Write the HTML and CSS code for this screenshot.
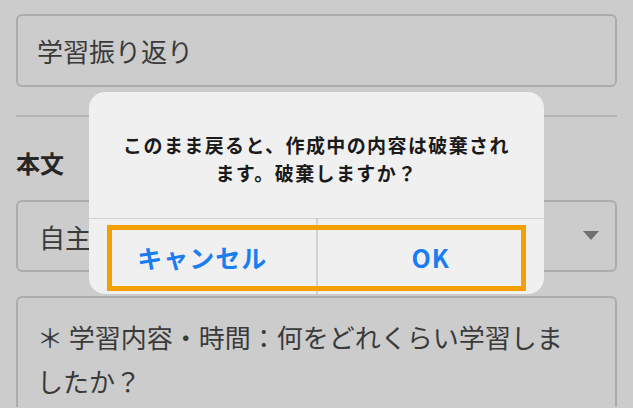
FILE: index.html
```html
<!DOCTYPE html>
<html>
<head>
<meta charset="utf-8">
<link rel="stylesheet" href="styles.css">
</head>
<body>

<div class="page">
  <div class="field title-field">学習振り返り</div>
  <div class="divider"></div>
  <div class="label">本文</div>
  <div class="field select-field">
    <span>自主学習</span>
    <span class="caret"></span>
  </div>
  <div class="field text-field">＊ 学習内容・時間：何をどれくらい学習しましたか？</div>
</div>

<!-- discard confirmation -->
<div class="alert">
  <div class="alert-message">このまま戻ると、作成中の内容は破棄されます。破棄しますか？</div>
  <div class="alert-actions">
    <button class="alert-button">キャンセル</button>
    <button class="alert-button">OK</button>
  </div>
</div>
<div class="highlight"></div>

</body>
</html>
```

FILE: styles.css
```css
html, body {
  margin: 0;
  height: 100%;
  overflow: hidden;
}

body {
  background-color: #cccccc;
  font-family: "Noto Sans CJK JP", "Noto Sans", sans-serif;
  color: #333;
  position: relative;
}

.page {
  padding: 14px 16px 0;
}

.field {
  box-sizing: border-box;
  border: 2px solid #acacac;
  border-radius: 6px;
  font-size: 26px;
  color: #3a3a3a;
}

.title-field {
  height: 73px;
  padding-left: 19px;
  display: flex;
  align-items: center;
}

.divider {
  height: 2px;
  background-color: #b4b4b4;
  margin-top: 28px;
}

.label {
  font-size: 24px;
  font-weight: bold;
  color: #262626;
  line-height: 30px;
  margin-top: 31px;
}

.select-field {
  height: 72px;
  margin-top: 22px;
  padding: 0 16px 0 21px;
  display: flex;
  align-items: center;
  justify-content: space-between;
}

.caret {
  width: 0;
  height: 0;
  border-left: 8px solid transparent;
  border-right: 8px solid transparent;
  border-top: 9px solid #707070;
  margin-top: -2px;
}

.text-field {
  margin-top: 24px;
  height: 111px; /* runs to the bottom of the window */
  padding: 17px 39px 0 19px;
  line-height: 44px;
  border-bottom: none;
  border-radius: 6px 6px 0 0;
}

.alert {
  position: absolute;
  left: 89px;
  top: 92px;
  width: 455px;
  background-color: #f0f0f0;
  border-radius: 16px;
  overflow: hidden;
}

.alert-message {
  padding: 39px 28px 31px;
  text-align: center;
  font-size: 19px;
  letter-spacing: 1.4px;
  line-height: 28px;
  font-weight: bold;
  color: #1a1a1a;
}

.alert-actions {
  display: flex;
  border-top: 1px solid #d2d2d2;
}

.alert-button {
  flex: 1;
  height: 75px;
  border: none;
  background: none;
  font-family: inherit;
  font-size: 25px;
  letter-spacing: 1px;
  font-weight: bold;
  color: #1b7df2;
  padding: 0;
}

.alert-button + .alert-button {
  border-left: 2px solid #d0d0d0;
}

/* orange marker drawn over the buttons */
.highlight {
  position: absolute;
  left: 107px;
  top: 225px;
  width: 419px;
  height: 66px;
  box-sizing: border-box;
  border: 5px solid #f3a000;
}
```
